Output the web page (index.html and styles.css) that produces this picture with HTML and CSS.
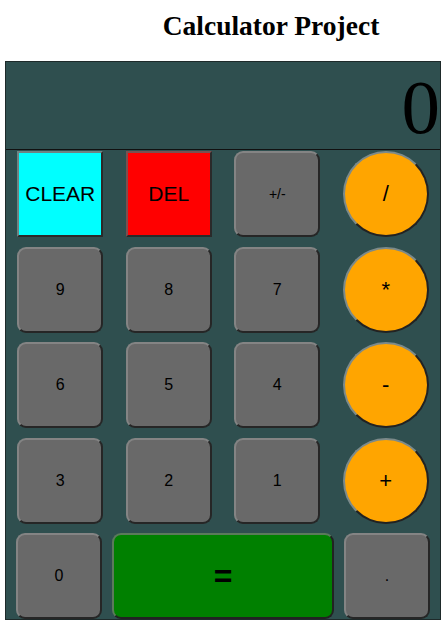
FILE: index.html
```html
<!DOCTYPE html>
<html>
<head>
<meta charset="utf-8">
<title>Calculator Project</title>
<link rel="stylesheet" href="styles.css">
</head>
<body>
<h1 class="title">Calculator Project</h1>
<div class="calc">
  <div class="display">0</div>
  <div class="keys">
    <div class="row">
      <button class="key clear">CLEAR</button>
      <button class="key del">DEL</button>
      <button class="key num small">+/-</button>
      <button class="key op">/</button>
    </div>
    <div class="row">
      <button class="key num">9</button>
      <button class="key num">8</button>
      <button class="key num">7</button>
      <button class="key op">*</button>
    </div>
    <div class="row">
      <button class="key num">6</button>
      <button class="key num">5</button>
      <button class="key num">4</button>
      <button class="key op">-</button>
    </div>
    <div class="row">
      <button class="key num">3</button>
      <button class="key num">2</button>
      <button class="key num">1</button>
      <button class="key op">+</button>
    </div>
    <div class="row last">
      <button class="key num">0</button>
      <button class="key equals">=</button>
      <button class="key num">.</button>
    </div>
  </div>
</div>
</body>
</html>
```

FILE: styles.css
```css
html, body {
  margin: 0;
  padding: 0;
  background: #ffffff;
}

.title {
  font-family: "Liberation Serif", "Times New Roman", serif;
  font-weight: bold;
  font-size: 27.5px;
  line-height: 32px;
  margin: 10px 0 19px 0;
  padding-left: 98px;
  text-align: center;
  color: #000;
}

.calc {
  margin-left: 5px;
  width: 434px;
  border: 1px solid #1e2a2a;
  background: #2f4f4f;
}

.display {
  height: 88px;
  box-sizing: border-box;
  padding-top: 4px;
  line-height: 83px;
  border-bottom: 1px solid #111;
  font-family: "Liberation Serif", "Times New Roman", serif;
  font-size: 77px;
  text-align: right;
  color: #000;
}

.keys {
  display: flex;
  flex-direction: column;
  gap: 9.5px;
  padding: 1px 0 0 0;
  height: 469px;
  box-sizing: border-box;
}

.row {
  display: flex;
  justify-content: space-around;
}

.row.last {
  justify-content: space-evenly;
}

.key {
  box-sizing: border-box;
  width: 86px;
  height: 86px;
  margin: 0;
  padding: 0;
  border-width: 2px;
  border-style: solid;
  border-color: #848484 #262626 #262626 #848484;
  font-family: "Liberation Sans", Arial, sans-serif;
  color: #000;
}

.num {
  background: #696969;
  border-radius: 9px;
  font-size: 16px;
}

.num.small {
  font-size: 14px;
}

.clear {
  background: #00ffff;
  font-size: 21px;
  border-color: #6f8383 #2a2a2a #2a2a2a #6f8383;
}

.del {
  background: #ff0000;
  font-size: 21px;
  border-color: #7a5050 #2a2a2a #2a2a2a #7a5050;
}

.op {
  background: #ffa500;
  border-radius: 50%;
  font-size: 22px;
  border-color: #7c8a8a #222 #222 #7c8a8a;
}

.equals {
  width: 222px;
  background: #008000;
  border-radius: 9px;
  font-size: 32px;
  font-weight: bold;
  border-color: #5b7a5b #222 #222 #5b7a5b;
}
```
